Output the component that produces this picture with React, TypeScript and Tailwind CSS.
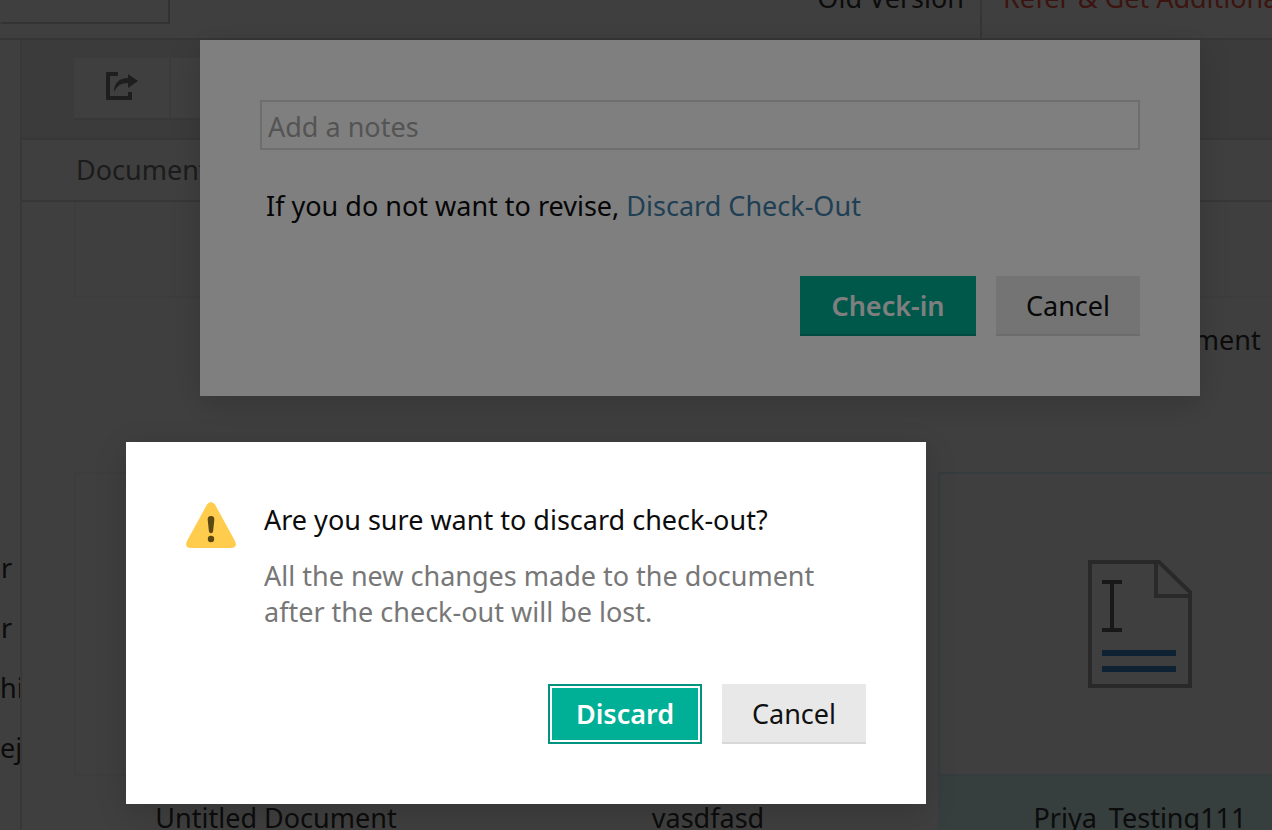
import type { ReactNode } from "react";
import clsx from "clsx";

const SIDEBAR_ITEMS = ["r", "r", "hi", "ej"];

const ShareIcon = () => (
  <svg width="32" height="28" viewBox="0 0 32 28" fill="#787878">
    <path d="M0 0h12v4H4v20h18v-4h4v8H0z" />
    <path d="M22 2l10 7-10 7v-5c-7 0-11 3-14 9 0-9 5-14 14-14z" />
  </svg>
);

const DocumentIcon = () => (
  <svg width="104" height="128" viewBox="0 0 104 128" fill="none">
    <path
      d="M2 2h69l31 30v94H2zM68 2v34h34"
      stroke="#a4a4a4"
      strokeWidth="4"
    />
    <path d="M14 22h20M14 70h20M24 22v48" stroke="#606060" strokeWidth="4" />
    <path d="M14 93h74M14 109h74" stroke="#3a88d0" strokeWidth="6" />
  </svg>
);

const WarningIcon = () => (
  <svg
    className="shrink-0"
    width="50"
    height="46"
    viewBox="0 0 50 46"
    role="img"
    aria-label="Warning"
  >
    <path
      d="M21 2.5Q25-2.5 29 2.5L49 39Q52 46 45 46H5Q-2 46 1 39z"
      fill="#ffcc4d"
    />
    <path
      d="M25 14c2.500 0 3.500 1.500 3.300 4l-1.200 11c-.5 3-3.700 3-4.200 0l-1.200-11c-.2-2.500.8-4 3.300-4z"
      fill="#5c4813"
    />
    <circle cx="25" cy="37" r="3.200" fill="#5c4813" />
  </svg>
);

interface ButtonProps {
  children: ReactNode;
  variant: "primary" | "focused" | "secondary";
}

const Button = ({ children, variant }: ButtonProps) => (
  <button
    type="button"
    className={clsx(
      "h-[60px] text-center",
      variant === "primary" &&
        "w-[176px] border-y-2 border-t-[#00b096] border-b-[#009480] bg-[#00b096] font-semibold text-white",
      variant === "focused" &&
        "w-[154px] border-2 border-[#009480] bg-[#00b096] font-semibold text-white outline-none ring-2 ring-white ring-inset",
      variant === "secondary" &&
        "w-36 border-y-2 border-t-[#e8e8e8] border-b-[#d8d8d8] bg-[#e8e8e8] text-[#111111]"
    )}
  >
    {children}
  </button>
);

interface DocumentCardProps {
  name?: string;
  selected?: boolean;
  cropped?: boolean;
}

const DocumentCard = ({ name, selected, cropped }: DocumentCardProps) => (
  <div
    className={clsx(
      cropped ? "h-[174px]" : "h-[382px]",
      selected && "bg-[#daf8fa]"
    )}
  >
    <div
      className={clsx(
        "flex items-center justify-center border-2 bg-[#fcfcfc]",
        selected ? "border-[#d0f0f4]" : "border-[#f4f4f4]",
        cropped ? "h-24 border-t-0" : "h-[304px]"
      )}
    >
      {!cropped && <DocumentIcon />}
    </div>
    {name && <p className="pt-6 text-center">{name}</p>}
  </div>
);

const Header = () => (
  <header className="flex h-10 items-end justify-between overflow-hidden border-b-2 border-[#d8d8d8] bg-white">
    <div className="mb-[14px] h-10 w-[170px] border-2 border-[#cccccc] border-l-white"></div>
    <nav className="flex h-14 w-[456px] shrink-0 items-end whitespace-nowrap">
      <a
        href="#old"
        className="flex h-14 w-[166px] shrink-0 items-end justify-end border-r-2 border-[#d8d8d8] pr-4 pb-[22px]"
      >
        Old Version
      </a>
      <a href="#refer" className="pb-[22px] pl-[21px] text-[#f05040]">
        Refer & Get Additional
      </a>
    </nav>
  </header>
);

const Sidebar = () => (
  <aside className="w-[22px] shrink-0 overflow-hidden border-r-2 border-[#e0e0e0] bg-white pt-[498px]">
    {SIDEBAR_ITEMS.map((item, index) => (
      <p
        key={index}
        className={clsx("flex h-[60px] items-center", item === "r" && "pl-px")}
      >
        {item}
      </p>
    ))}
  </aside>
);

const App = () => {
  return (
    <div className="relative flex h-screen flex-col overflow-hidden bg-white font-['Noto_Sans',sans-serif] text-[27px] leading-9 text-[#303030]">
      <Header />
      <div className="flex min-h-0 flex-1">
        <Sidebar />
        <main className="min-w-0 flex-1 overflow-hidden">
          <div className="flex h-[100px] items-center border-b-2 border-[#dddddd] bg-[#ededed] pl-[52px]">
            <div className="flex h-[62px] border-b-2 border-[#e2e2e2] bg-white">
              <button
                type="button"
                aria-label="Share"
                className="flex w-[97px] items-center justify-center border-r-2 border-[#eeeeee] pb-1"
              >
                <ShareIcon />
              </button>
              <div className="w-24"></div>
            </div>
          </div>
          <h1 className="flex h-[62px] items-center border-b-2 border-[#dddddd] pl-[54px] text-[#707070]">
            Documents
          </h1>
          <div className="grid grid-cols-[404px_404px_404px] gap-x-7 gap-y-24 pl-[52px]">
            <DocumentCard cropped />
            <DocumentCard cropped />
            <DocumentCard name="Untitled Document" cropped />
            <DocumentCard name="Untitled Document" />
            <DocumentCard name="vasdfasd" />
            <DocumentCard name="Priya_Testing111" selected />
          </div>
        </main>
      </div>

      <div className="absolute inset-0 bg-black/50 pt-10 pl-[200px]">
        <section
          role="dialog"
          aria-label="Check-in"
          className="max-w-[1000px] bg-white p-[60px] text-[#0c0c0c] shadow-[0_8px_30px_rgba(0,0,0,0.16)]"
        >
          <input
            type="text"
            aria-label="Notes"
            placeholder="Add a notes"
            className="block h-[50px] w-full border-2 border-[#dcdcdc] px-[6px] pt-[2px] placeholder:text-[#a9a9a9]"
          />
          <p className="mt-[38px] px-[6px]">
            If you do not want to revise,{" "}
            <a href="#discard" className="text-[#3f7fa8]">
              Discard Check-Out
            </a>
          </p>
          <div className="mt-[52px] flex justify-end gap-5">
            <Button variant="primary">Check-in</Button>
            <Button variant="secondary">Cancel</Button>
          </div>
        </section>
      </div>

      <div className="absolute inset-0 bg-black/50 pt-[442px] pl-[126px]">
        <section
          role="alertdialog"
          aria-labelledby="discard-title"
          className="max-w-[800px] bg-white p-[60px] shadow-[0_8px_30px_rgba(0,0,0,0.16)]"
        >
          <div className="flex items-start gap-7">
            <WarningIcon />
            <div>
              <h2 id="discard-title" className="text-[#0c0c0c]">
                Are you sure want to discard check-out?
              </h2>
              <p className="mt-5 text-[#777777]">
                All the new changes made to the document
                <br />
                after the check-out will be lost.
              </p>
            </div>
          </div>
          <div className="mt-[54px] flex justify-end gap-5">
            <Button variant="focused">Discard</Button>
            <Button variant="secondary">Cancel</Button>
          </div>
        </section>
      </div>
    </div>
  );
};

export default App;
